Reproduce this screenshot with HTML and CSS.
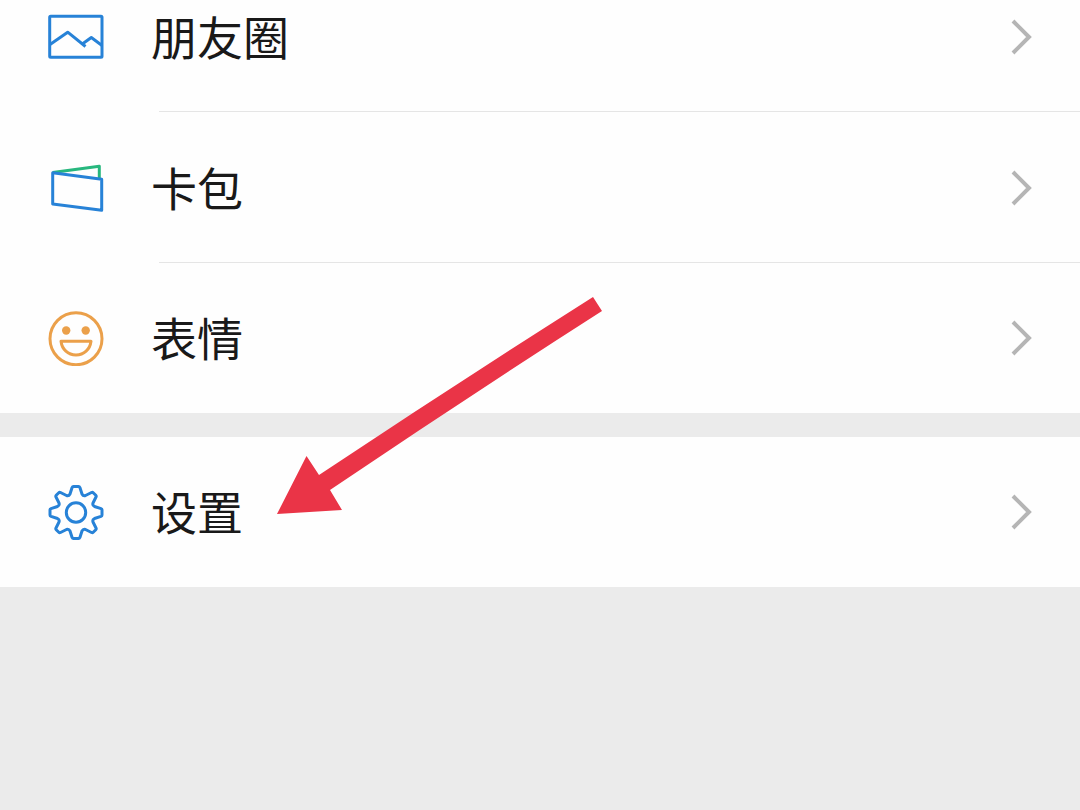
FILE: index.html
```html
<!DOCTYPE html>
<html lang="zh-CN">
<head>
<meta charset="utf-8">
<meta name="viewport" content="width=device-width, initial-scale=1">
<title>设置</title>
<link rel="stylesheet" href="styles.css">
</head>
<body>
<main class="page">
  <nav class="group">
    <a class="row row-first" href="#moments">
      <svg class="icon blue" viewBox="0 0 56 56" aria-hidden="true">
        <rect x="1.7" y="7.2" width="52.3" height="41" rx="1"/>
        <path d="M2 35.5 19.7 23.2 37.5 37.5M35 34.5 43.3 28.5 54 36.5"/>
      </svg>
      <span class="label">朋友圈</span>
      <svg class="chevron" viewBox="0 0 24 40" aria-hidden="true"><path d="M4 4 20 20 4 36"/></svg>
    </a>
    <a class="row" href="#cards">
      <svg class="icon blue" viewBox="0 0 56 56" aria-hidden="true">
        <path class="green" d="M4.7 12.5 51.3 6.3V19"/>
        <path d="M4.7 12.7 53.7 19.3V50.3L4.7 44Z"/>
      </svg>
      <span class="label">卡包</span>
      <svg class="chevron" viewBox="0 0 24 40" aria-hidden="true"><path d="M4 4 20 20 4 36"/></svg>
    </a>
    <a class="row row-last" href="#stickers">
      <svg class="icon orange" viewBox="0 0 56 56" aria-hidden="true">
        <circle cx="28" cy="28.7" r="26"/>
        <circle class="eye" cx="18.2" cy="20.5" r="4.2"/>
        <circle class="eye" cx="37.7" cy="20.5" r="4.2"/>
        <path d="M13 31.3H43C42 39.5 36 45 28 45S14 39.500 13 31.3Z"/>
      </svg>
      <span class="label">表情</span>
      <svg class="chevron" viewBox="0 0 24 40" aria-hidden="true"><path d="M4 4 20 20 4 36"/></svg>
    </a>
  </nav>
  <nav class="group">
    <a class="row row-last" href="#settings">
      <svg class="icon blue" viewBox="0 0 56 56" aria-hidden="true">
        <g transform="translate(28 28.5)">
          <path d="M-2.5-26H2.500Q3.500-26 3.900-25L6-18.500Q7.200-16.200 9.500-17L15.500-20Q16.500-20.500 17.200-19.800L19.800-17.200Q20.500-16.500 20-15.500L17-9.500Q16.200-7.200 18.500-6L25-3.900Q26-3.500 26-2.500V2.500Q26 3.500 25 3.900L18.500 6Q16.200 7.200 17 9.500L20 15.500Q20.500 16.500 19.800 17.200L17.200 19.800Q16.500 20.500 15.500 20L9.500 17Q7.200 16.200 6 18.500L3.900 25Q3.500 26 2.500 26H-2.500Q-3.500 26-3.900 25L-6 18.500Q-7.200 16.200-9.500 17L-15.500 20Q-16.500 20.500-17.200 19.800L-19.800 17.200Q-20.500 16.500-20 15.500L-17 9.500Q-16.200 7.200-18.500 6L-25 3.900Q-26 3.500-26 2.500V-2.500Q-26-3.500-25-3.900L-18.500-6Q-16.200-7.200-17-9.500L-20-15.500Q-20.500-16.500-19.800-17.200L-17.200-19.800Q-16.500-20.500-15.500-20L-9.500-17Q-7.200-16.200-6-18.500L-3.900-25Q-3.500-26-2.500-26Z"/>
          <circle r="9.7"/>
        </g>
      </svg>
      <span class="label">设置</span>
      <svg class="chevron" viewBox="0 0 24 40" aria-hidden="true"><path d="M4 4 20 20 4 36"/></svg>
    </a>
  </nav>
  <svg class="arrow" viewBox="0 0 328 220" aria-hidden="true">
    <path d="M1 218 30.500 160 43 179Q180 88 317 1L326 15Q190 102 54 194L66 214Z"/>
  </svg>
</main>
</body>
</html>
```
FILE: styles.css
```css
* {
  box-sizing: border-box;
}

body {
  margin: 0;
  background: #ebebeb;
  color: #191919;
  font-family: "Noto Sans CJK SC", sans-serif;
}

.page {
  position: relative;
  display: flex;
  flex-direction: column;
  gap: 24px;
}

.group {
  background: #fefefe;
}

.row {
  position: relative;
  display: flex;
  align-items: center;
  min-height: 151px;
  padding: 0 47px 0 48px;
  color: inherit;
  text-decoration: none;
}

.row::after {
  content: "";
  position: absolute;
  right: 0;
  bottom: 0;
  left: 159px;
  height: 1px;
  background: #e5e5e5;
}

.row-first {
  min-height: 112px;
  padding-bottom: 38px;
}

.row-last {
  min-height: 150px;
}

.row-last::after {
  display: none;
}

.icon {
  flex: none;
  width: 56px;
  height: 56px;
  fill: none;
  stroke-width: 3;
  stroke-linejoin: round;
}

.blue {
  stroke: #2782d7;
}

.green {
  stroke: #27b77e;
}

.orange {
  stroke: #eba04a;
}

.eye {
  fill: #eba04a;
  stroke: none;
}

.label {
  flex: 1;
  margin-left: 47px;
  padding-bottom: 4px;
  font-size: 46px;
  line-height: 64px;
}

.chevron {
  flex: none;
  width: 24px;
  height: 40px;
  fill: none;
  stroke: #b5b5b5;
  stroke-width: 4;
}

.arrow {
  position: absolute;
  top: 296px;
  left: 276px;
  width: 328px;
  height: 220px;
  fill: #ea3447;
  pointer-events: none;
}
```
